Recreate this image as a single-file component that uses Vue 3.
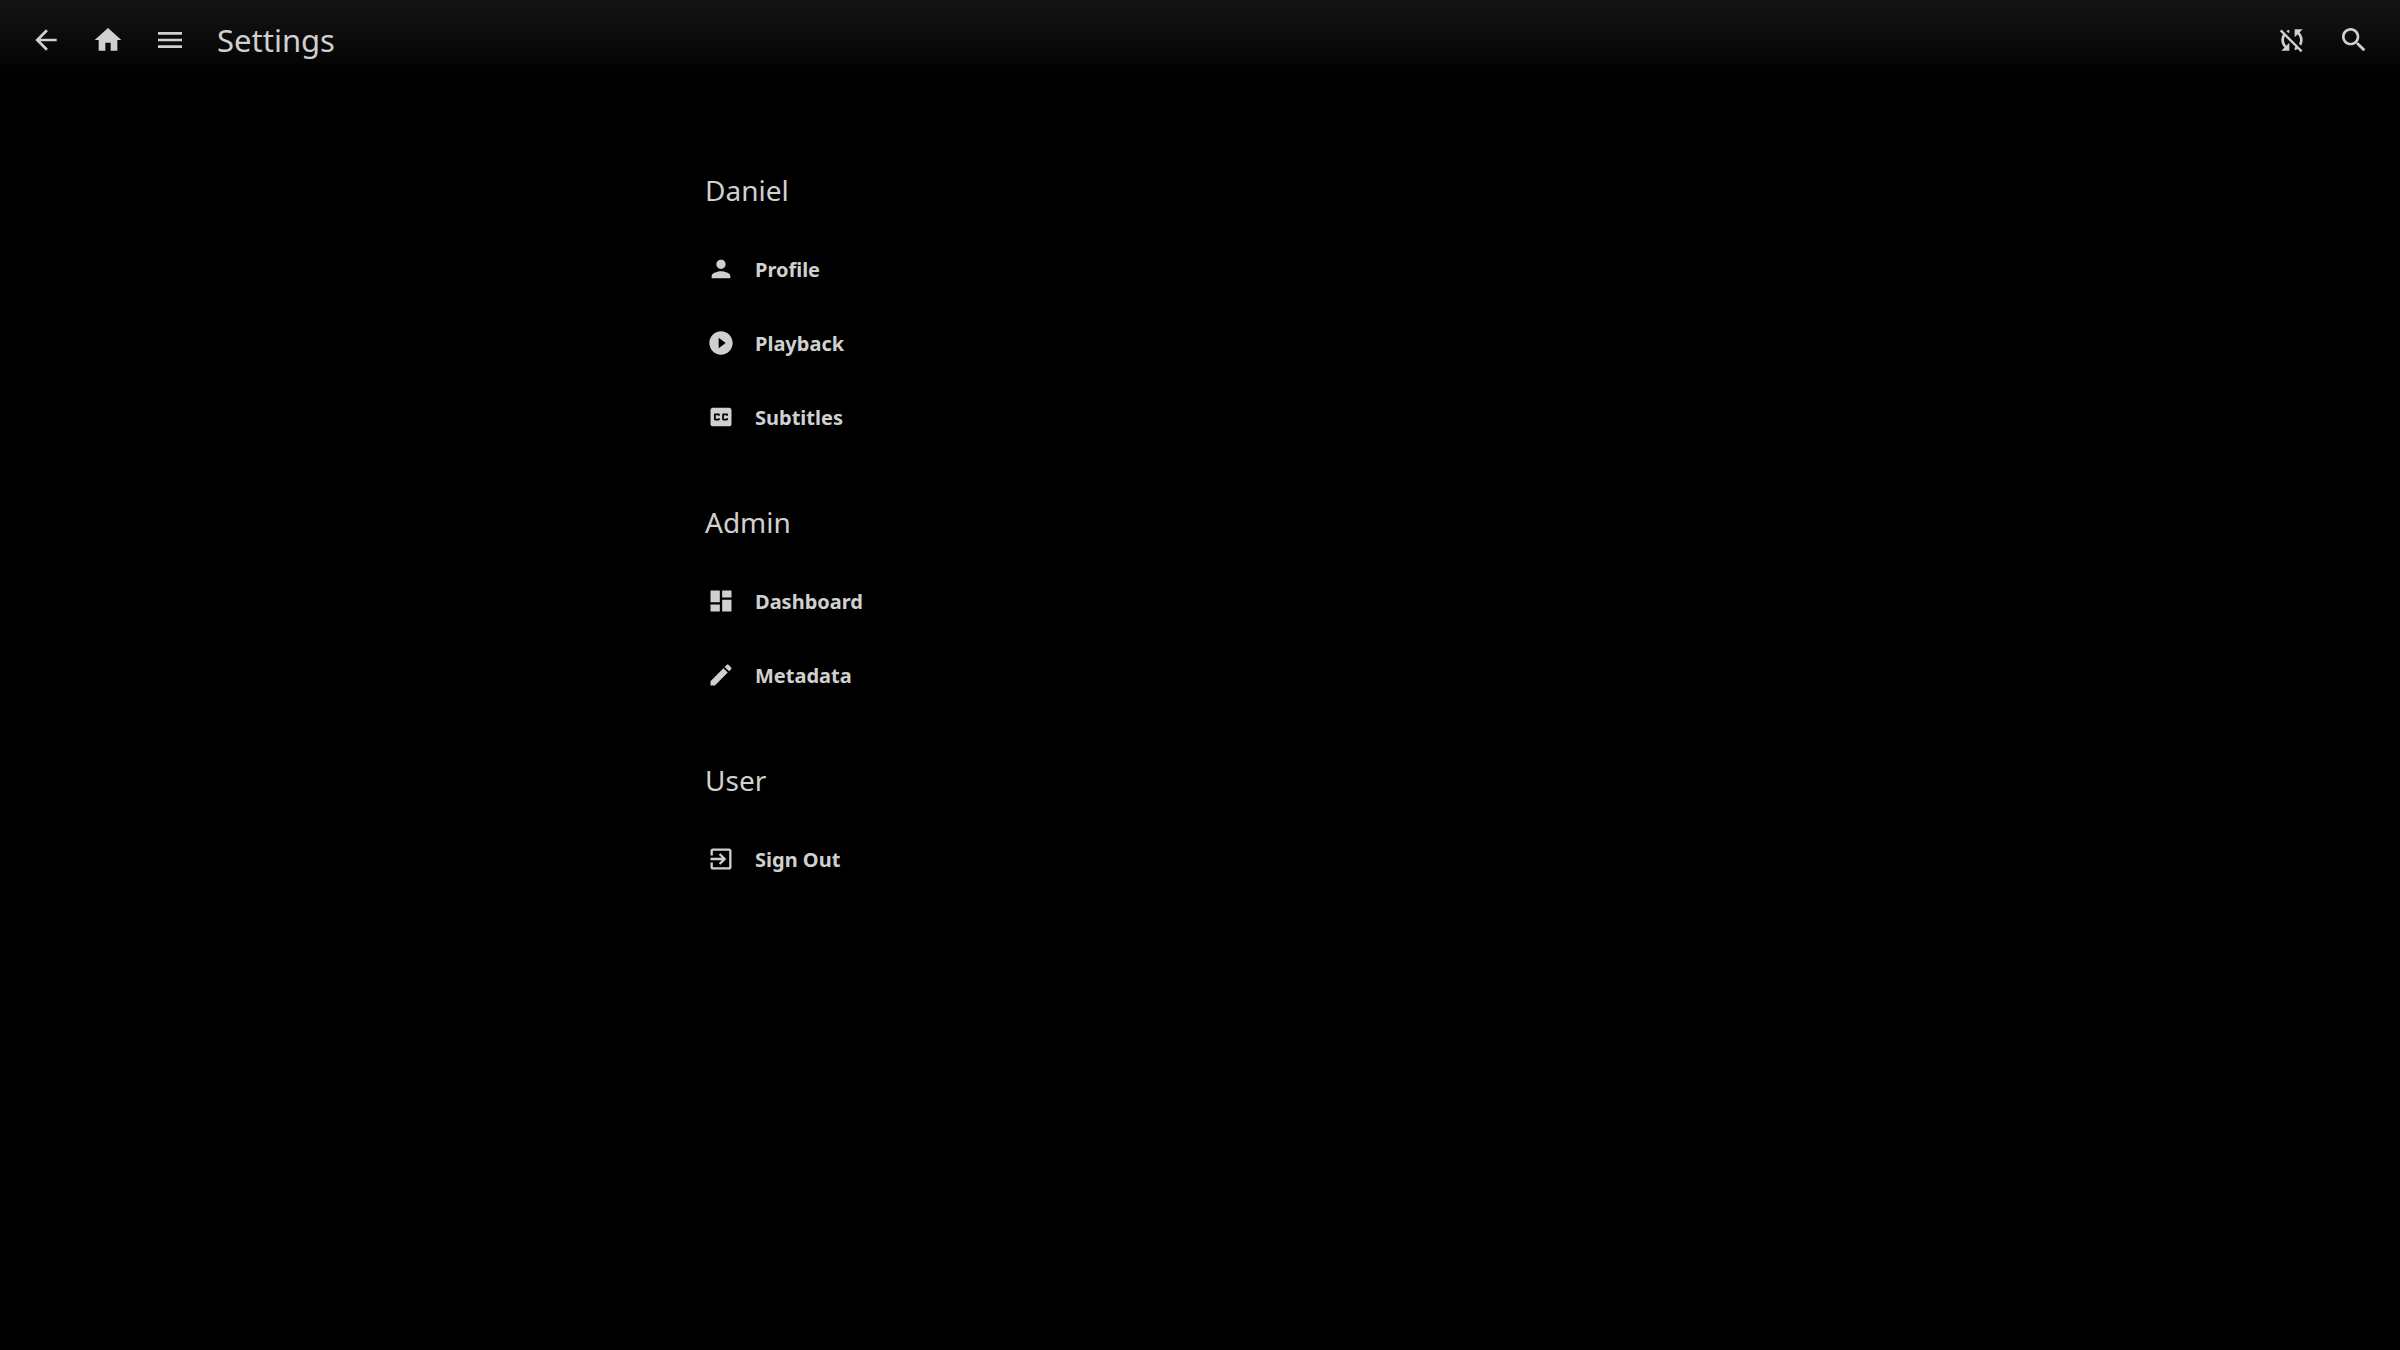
<script setup>
const icons = {
  back: 'M20 11H7.83l5.59-5.59L12 4l-8 8 8 8 1.41-1.41L7.83 13H20v-2z',
  home: 'M10 20v-6h4v6h5v-8h3L12 3 2 12h3v8z',
  menu: 'M3 18h18v-2H3v2zm0-5h18v-2H3v2zm0-7v2h18V6H3z',
  sync: 'M10 6.35V4.26c-.8.21-1.55.54-2.23.96l1.46 1.46c.25-.12.5-.24.77-.33zm-7.14-.94l2.36 2.36C4.45 8.99 4 10.44 4 12c0 2.21.91 4.2 2.36 5.64L4 20h6v-6l-2.24 2.24C6.68 15.15 6 13.66 6 12c0-1 .25-1.94.68-2.77l8.08 8.08c-.25.13-.5.25-.77.34v2.09c.8-.21 1.55-.54 2.23-.96l2.36 2.36 1.27-1.27L4.14 4.14 2.86 5.41zM20 4h-6v6l2.24-2.24C17.32 8.85 18 10.34 18 12c0 1-.25 1.94-.68 2.77l1.46 1.46C19.55 15.01 20 13.56 20 12c0-2.21-.91-4.2-2.36-5.64L20 4z',
  search: 'M15.5 14h-.79l-.28-.27C15.41 12.59 16 11.11 16 9.5 16 5.91 13.09 3 9.5 3S3 5.91 3 9.5 5.91 16 9.5 16c1.61 0 3.09-.59 4.23-1.57l.27.28v.79l5 4.99L20.49 19l-4.99-5zm-6 0C7.01 14 5 11.99 5 9.5S7.01 5 9.5 5 14 7.01 14 9.5 11.99 14 9.5 14z',
  person: 'M12 12c2.21 0 4-1.79 4-4s-1.79-4-4-4-4 1.79-4 4 1.79 4 4 4zm0 2c-2.67 0-8 1.34-8 4v2h16v-2c0-2.66-5.33-4-8-4z',
  play: 'M12 2C6.48 2 2 6.48 2 12s4.48 10 10 10 10-4.48 10-10S17.52 2 12 2zm-2 14.5v-9l6 4.5-6 4.5z',
  captions: 'M19 4H5c-1.11 0-2 .9-2 2v12c0 1.1.89 2 2 2h14c1.1 0 2-.9 2-2V6c0-1.1-.9-2-2-2zm-8 7H9.5v-.5h-2v3h2V13H11v1c0 .55-.45 1-1 1H7c-.55 0-1-.45-1-1v-4c0-.55.45-1 1-1h3c.55 0 1 .45 1 1v1zm7 0h-1.5v-.5h-2v3h2V13H18v1c0 .55-.45 1-1 1h-3c-.55 0-1-.45-1-1v-4c0-.55.45-1 1-1h3c.55 0 1 .45 1 1v1z',
  dashboard: 'M3 13h8V3H3v10zm0 8h8v-6H3v6zm10 0h8V11h-8v10zm0-18v6h8V3h-8z',
  edit: 'M3 17.25V21h3.75L17.81 9.94l-3.75-3.75L3 17.25zM20.71 7.04c.39-.39.39-1.02 0-1.41l-2.34-2.34c-.39-.39-1.02-.39-1.41 0l-1.83 1.83 3.75 3.75 1.83-1.83z',
  exit: 'M10.09 15.59L11.5 17l5-5-5-5-1.41 1.41L12.67 11H3v2h9.67l-2.58 2.59zM19 3H5c-1.11 0-2 .9-2 2v4h2V5h14v14H5v-4H3v4c0 1.1.89 2 2 2h14c1.1 0 2-.9 2-2V5c0-1.1-.9-2-2-2z'
}
const left = [['back', 'Back'], ['home', 'Home'], ['menu', 'Menu']]
const right = [['sync', 'SyncPlay'], ['search', 'Search']]
const sections = [
  { title: 'Daniel', items: [['person', 'Profile'], ['play', 'Playback'], ['captions', 'Subtitles']] },
  { title: 'Admin', items: [['dashboard', 'Dashboard'], ['edit', 'Metadata']] },
  { title: 'User', items: [['exit', 'Sign Out']] }
]
</script>

<template>
  <div class="page">
    <header class="bar">
      <button v-for="[icon, label] in left" :key="icon" type="button" class="tool" :aria-label="label">
        <svg viewBox="0 0 24 24" aria-hidden="true"><path :d="icons[icon]" /></svg>
      </button>
      <h1>Settings</h1>
      <button v-for="[icon, label] in right" :key="icon" type="button" class="tool" :aria-label="label">
        <svg viewBox="0 0 24 24" aria-hidden="true"><path :d="icons[icon]" /></svg>
      </button>
    </header>
    <main>
      <section v-for="section in sections" :key="section.title">
        <h2>{{ section.title }}</h2>
        <a v-for="[icon, label] in section.items" :key="label" href="#" class="row">
          <svg viewBox="0 0 24 24" aria-hidden="true"><path :d="icons[icon]" /></svg>
          <span>{{ label }}</span>
        </a>
      </section>
    </main>
  </div>
</template>

<style>
body { margin: 0; background: #000; }
</style>

<style scoped>
.page { min-height: 100vh; color: #d0d0d0; font-family: "Noto Sans", sans-serif; }
.bar {
  display: flex;
  align-items: center;
  height: 80px;
  padding: 0 15px;
  box-sizing: border-box;
  background: linear-gradient(#151515, #000);
}
.tool {
  display: flex;
  width: 52px;
  height: 52px;
  margin: 0 5px;
  padding: 10px;
  border: 0;
  background: none;
  color: inherit;
  cursor: pointer;
}
svg { flex: none; display: block; fill: currentColor; }
.tool svg { width: 32px; height: 32px; }
h1 { flex: 1; margin: 0 0 0 16px; font-size: 31px; font-weight: 400; line-height: 42px; }
main { width: 990px; max-width: 100%; margin: 0 auto; padding-top: 90px; }
section { margin-bottom: 48px; }
h2 { margin: 0 0 22px; font-size: 28px; font-weight: 400; line-height: 40px; }
.row {
  display: flex;
  align-items: center;
  gap: 20px;
  height: 74px;
  padding-left: 2px;
  color: inherit;
  font-size: 20px;
  font-weight: 700;
  line-height: 30px;
  text-decoration: none;
}
.row svg { width: 28px; height: 28px; }
.row span { padding-top: 2px; }
</style>
